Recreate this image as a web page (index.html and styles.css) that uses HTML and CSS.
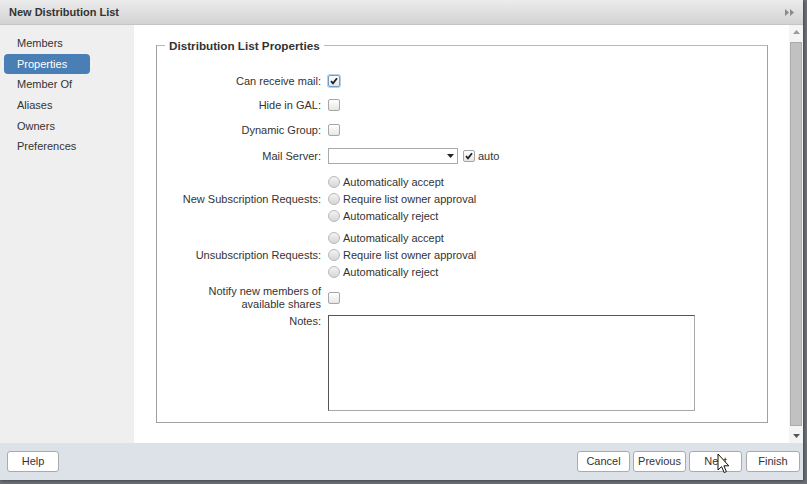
FILE: index.html
```html
<html>
<head>
  <link rel="stylesheet" href="styles.css">
</head>
<body>
  <div class="dialog">
    <div class="titlebar">
      <span class="title">New Distribution List</span>
      <svg class="title-icon" width="9" height="7" viewBox="0 0 9 7"><path d="M0 0 L4 3.5 L0 7 Z M5 0 L9 3.5 L5 7 Z" fill="#8a8a8a"/></svg>
    </div>
    <div class="main">
      <div class="nav">
        <div class="nav-item">Members</div>
        <div class="nav-item selected">Properties</div>
        <div class="nav-item">Member Of</div>
        <div class="nav-item">Aliases</div>
        <div class="nav-item">Owners</div>
        <div class="nav-item">Preferences</div>
      </div>
      <div class="content">
        <div class="scroll-area">
          <fieldset class="props">
            <legend>Distribution List Properties</legend>

            <div class="row r-mail">
              <label class="row-label">Can receive mail:</label>
              <span class="check checked focus"><svg width="8" height="8" viewBox="0 0 8 8"><path d="M1 4.2 L3 6.4 L7 1.2" fill="none" stroke="#222" stroke-width="1.8"/></svg></span>
            </div>
            <div class="row r-gal">
              <label class="row-label">Hide in GAL:</label>
              <span class="check"></span>
            </div>
            <div class="row r-dyn">
              <label class="row-label">Dynamic Group:</label>
              <span class="check"></span>
            </div>
            <div class="row r-server">
              <label class="row-label">Mail Server:</label>
              <div class="select"><svg width="7" height="4" viewBox="0 0 7 4"><path d="M0 0 H7 L3.5 4 Z" fill="#222"/></svg></div>
              <span class="check checked"><svg width="8" height="8" viewBox="0 0 8 8"><path d="M1 4.2 L3 6.4 L7 1.2" fill="none" stroke="#222" stroke-width="1.8"/></svg></span>
              <span class="opt-text">auto</span>
            </div>

            <div class="row r-group">
              <label class="row-label">New Subscription Requests:</label>
              <div class="radios">
                <div class="radio-line"><span class="radio"></span>Automatically accept</div>
                <div class="radio-line"><span class="radio"></span>Require list owner approval</div>
                <div class="radio-line"><span class="radio"></span>Automatically reject</div>
              </div>
            </div>
            <div class="row r-group r-unsub">
              <label class="row-label">Unsubscription Requests:</label>
              <div class="radios">
                <div class="radio-line"><span class="radio"></span>Automatically accept</div>
                <div class="radio-line"><span class="radio"></span>Require list owner approval</div>
                <div class="radio-line"><span class="radio"></span>Automatically reject</div>
              </div>
            </div>

            <div class="row r-notify">
              <label class="row-label">Notify new members of<br>available shares</label>
              <span class="check"></span>
            </div>
            <div class="row r-notes">
              <label class="row-label">Notes:</label>
              <div class="notes"></div>
            </div>
          </fieldset>
        </div>
        <div class="scrollbar">
          <svg width="7" height="4" viewBox="0 0 7 4"><path d="M0 4 H7 L3.5 0 Z" fill="#9a9a9a"/></svg>
          <div class="thumb"></div>
          <svg width="7" height="4" viewBox="0 0 7 4"><path d="M0 0 H7 L3.5 4 Z" fill="#555"/></svg>
        </div>
      </div>
    </div>
    <div class="footer">
      <button class="btn">Help</button>
      <div class="footer-right">
        <button class="btn">Cancel</button>
        <button class="btn">Previous</button>
        <button class="btn">Next</button>
        <button class="btn btn-wide">Finish</button>
      </div>
    </div>
    <svg class="cursor" width="13" height="21" viewBox="0 0 13 21"><path d="M1 1 L1 17 L4.6 13.6 L7.2 19.6 L9.4 18.6 L6.9 12.8 L11.8 12.8 Z" fill="#fff" stroke="#111" stroke-width="1" stroke-linejoin="round"/></svg>
  </div>
</body>
</html>
```

FILE: styles.css
```css
* {
  box-sizing: border-box;
}

body {
  margin: 0;
  background-color: #6d7177;
  font-family: "Liberation Sans", Arial, sans-serif;
  font-size: 11px;
  color: #333;
}

.dialog {
  position: relative;
  width: 803px;
  height: 480px;
  display: flex;
  flex-direction: column;
  background-color: #fff;
  box-shadow: 1px 1px 3px rgba(0, 0, 0, 0.4);
}

.titlebar {
  height: 25px;
  display: flex;
  align-items: center;
  justify-content: space-between;
  padding: 0 9px 0 9px;
  background: linear-gradient(#ececec, #d2d2d2);
  border-bottom: 1px solid #c4c4c4;
}

.title {
  font-weight: bold;
  color: #333;
}

.title-icon {
  margin-top: 1px;
}

.main {
  flex: 1;
  display: flex;
  min-height: 0;
}

.nav {
  width: 134px;
  background-color: #efefef;
  padding: 8px 0 0 4px;
}

.nav-item {
  width: 86px;
  height: 20.7px;
  line-height: 20.7px;
  padding-left: 13px;
  border-radius: 4px;
  color: #333;
}

.nav-item.selected {
  background-color: #4a7fb5;
  color: #fff;
}

.content {
  flex: 1;
  display: flex;
  background-color: #fff;
}

.scroll-area {
  flex: 1;
  padding: 14px 21px 20px 22px;
  display: flex;
}

.props {
  flex: 1;
  margin: 0;
  padding: 0;
  border: 1px solid #a0a0a0;
  border-top-color: #b8b8b8;
}

.props legend {
  margin-left: 8px;
  padding: 0 4px;
  font-weight: bold;
  font-size: 11.7px;
  color: #333;
}

.row {
  display: flex;
  align-items: center;
}

.row-label {
  width: 171px;
  padding-right: 7px;
  text-align: right;
  flex-shrink: 0;
}

.r-mail {
  margin-top: 17px;
  height: 24px;
}

.r-gal {
  height: 24px;
}

.r-dyn {
  height: 26px;
}

.r-server {
  height: 26px;
}

.r-group {
  margin-top: 4px;
  height: 51px;
}

.r-unsub {
  margin-top: 5px;
}

.r-notify {
  margin-top: 5px;
  height: 26px;
  line-height: 13px;
}

.r-notes {
  align-items: flex-start;
  margin-top: 4px;
}

.check {
  width: 12px;
  height: 12px;
  border: 1px solid #a6a6a6;
  border-radius: 2px;
  background: linear-gradient(#ffffff, #e6e6e6);
  display: flex;
  align-items: center;
  justify-content: center;
}

.check.focus {
  border-color: #6f9bd0;
  box-shadow: 0 0 0 1px #b8d0ee;
}

.select {
  width: 130px;
  height: 16px;
  border: 1px solid #a9a9a9;
  background-color: #fff;
  display: flex;
  align-items: center;
  justify-content: flex-end;
  padding-right: 3px;
  margin-right: 5px;
}

.opt-text {
  margin-left: 3px;
}

.radios {
  display: flex;
  flex-direction: column;
}

.radio-line {
  height: 17px;
  display: flex;
  align-items: center;
}

.radio {
  width: 12px;
  height: 12px;
  border: 1px solid #b8b8b8;
  border-radius: 50%;
  background: linear-gradient(#f4f4f4, #d6d6d6);
  margin-right: 3px;
}

.notes {
  width: 367px;
  height: 96px;
  border: 1px solid #a8a8a8;
  border-top-color: #555;
  border-left-color: #555;
  background-color: #fff;
}

.scrollbar {
  width: 14px;
  display: flex;
  flex-direction: column;
  align-items: center;
  padding: 5px 0 5px 0;
  background-color: #f4f4f4;
}

.scrollbar svg {
  flex-shrink: 0;
}

.thumb {
  width: 12px;
  flex: 1;
  margin: 8px 0 8px 0;
  background-color: #c1c1c1;
  border: 1px solid #acacac;
}

.footer {
  height: 37px;
  display: flex;
  align-items: center;
  justify-content: space-between;
  padding: 0 3px 1px 7px;
  background-color: #dde1e8;
}

.footer-right {
  display: flex;
  gap: 3px;
}

.btn {
  width: 53px;
  height: 21px;
  padding: 0;
  font-family: "Liberation Sans", Arial, sans-serif;
  font-size: 11px;
  color: #333;
  background-color: #fff;
  border: 1px solid #aaa;
  border-radius: 3px;
}

.footer > .btn {
  width: 52px;
}

.btn-wide {
  width: 54px;
  margin-left: 1px;
}

.cursor {
  position: absolute;
  left: 717px;
  top: 453px;
}
```
